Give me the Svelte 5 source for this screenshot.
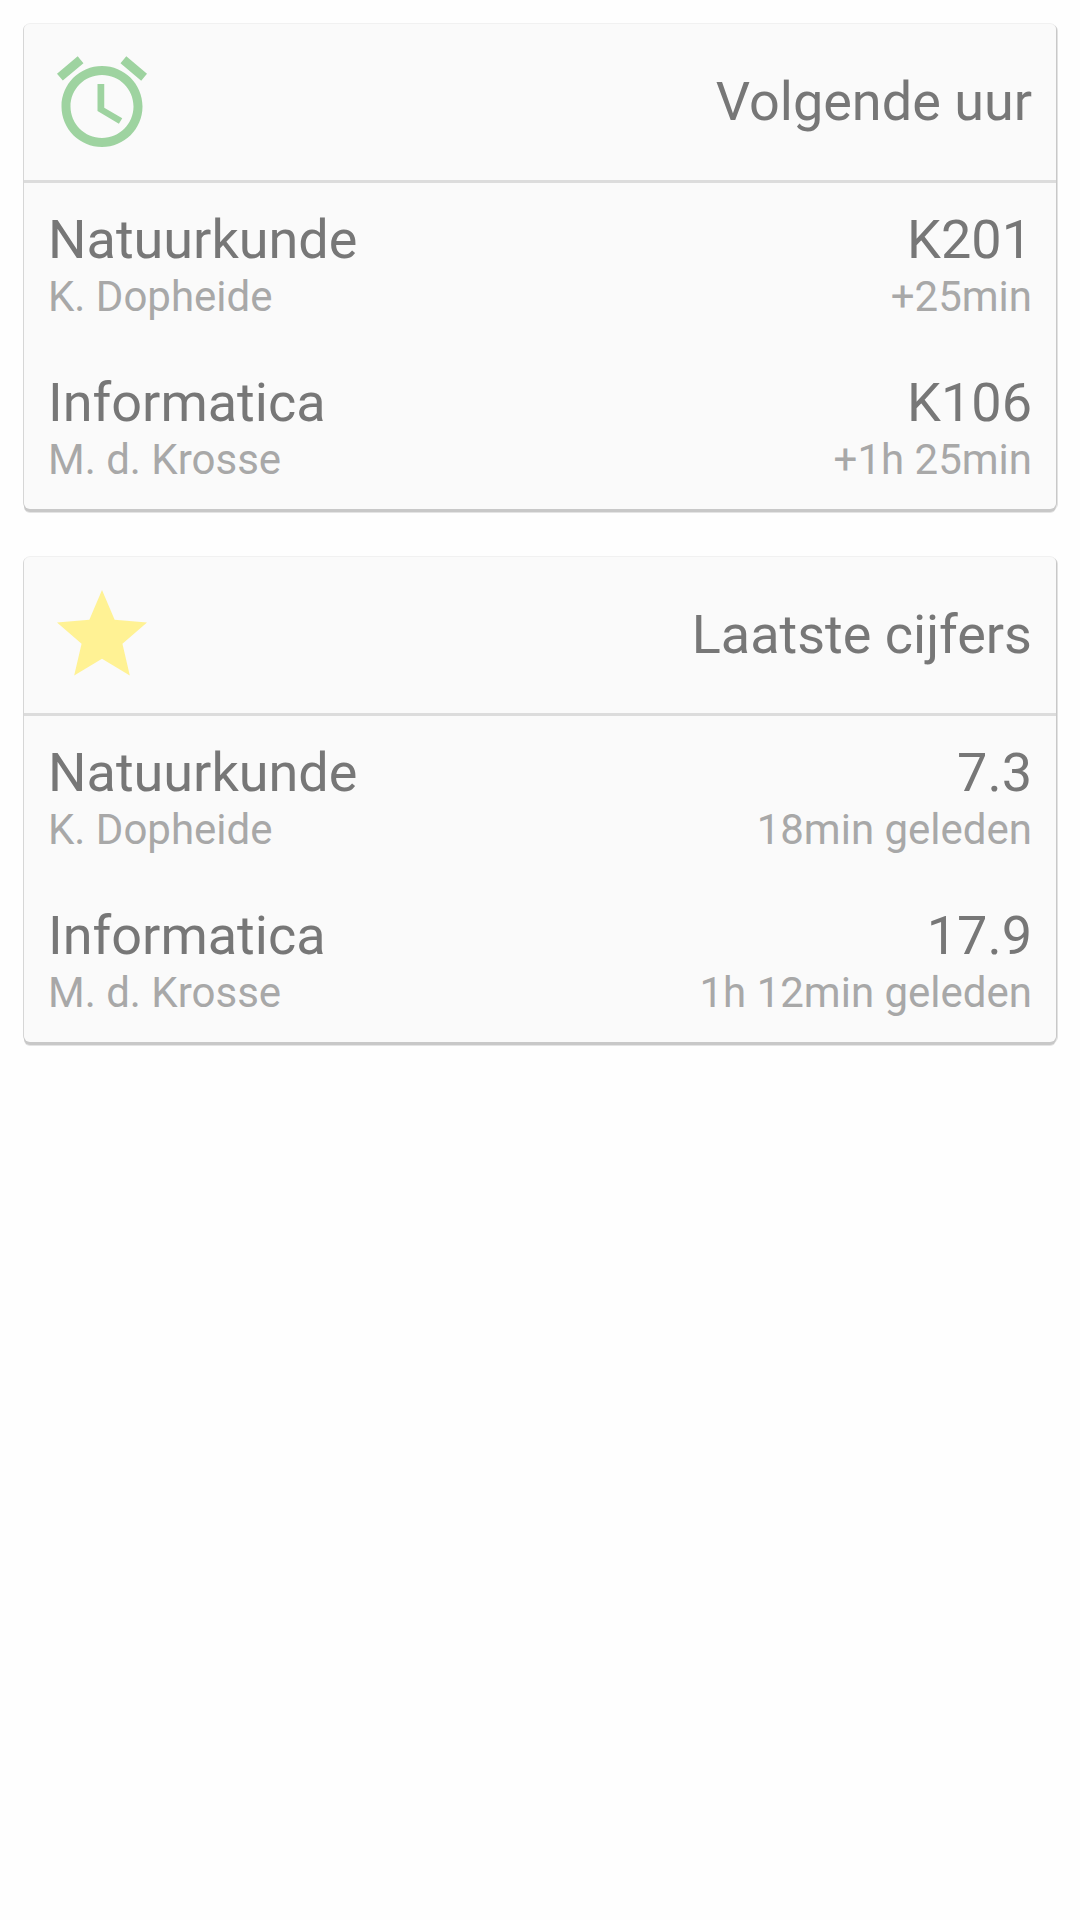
<script>
  const cards = [
    {
      title: 'Volgende uur',
      tone: 'green',
      icon: 'M22 5.72l-4.6-3.86-1.29 1.53 4.6 3.86L22 5.72zM7.88 3.39L6.6 1.86 2 5.71l1.29 1.53 4.59-3.85zM12.5 8H11v6l4.75 2.85.75-1.23-4-2.37V8zM12 4c-4.97 0-9 4.03-9 9s4.02 9 9 9c4.97 0 9-4.03 9-9s-4.03-9-9-9zm0 16c-3.87 0-7-3.13-7-7s3.13-7 7-7 7 3.13 7 7-3.13 7-7 7z',
      rows: [
        { subject: 'Natuurkunde', teacher: 'K. Dopheide', value: 'K201', time: '+25min' },
        { subject: 'Informatica', teacher: 'M. d. Krosse', value: 'K106', time: '+1h 25min' }
      ]
    },
    {
      title: 'Laatste cijfers',
      tone: 'yellow',
      icon: 'M12 17.27L18.18 21l-1.64-7.03L22 9.24l-7.19-.61L12 2 9.19 8.63 2 9.24l5.46 4.73L5.82 21z',
      rows: [
        { subject: 'Natuurkunde', teacher: 'K. Dopheide', value: '7.3', time: '18min geleden' },
        { subject: 'Informatica', teacher: 'M. d. Krosse', value: '17.9', time: '1h 12min geleden' }
      ]
    }
  ];
</script>

<main>
  {#each cards as card}
    <section class="card">
      <header>
        <svg class={card.tone} viewBox="0 0 24 24" aria-hidden="true"><path d={card.icon} /></svg>
        <h2>{card.title}</h2>
      </header>
      <ul>
        {#each card.rows as row}
          <li>
            <div class="side">
              <span class="primary">{row.subject}</span>
              <span class="secondary">{row.teacher}</span>
            </div>
            <div class="side end">
              <span class="primary">{row.value}</span>
              <span class="secondary">{row.time}</span>
            </div>
          </li>
        {/each}
      </ul>
    </section>
  {/each}
</main>

<style>
  :global(body) {
    margin: 0;
    background: #fefefe;
  }

  main {
    display: flex;
    flex-direction: column;
    gap: 48px;
    padding: 24px;
    font-family: Roboto, sans-serif;
    color: #777;
  }

  .card {
    border-radius: 6px;
    background: #fafafa;
    box-shadow:
      0 -1px 0 #f1f1f1,
      0 3px 0 #c8c8c8,
      -1px 0 0 #d6d6d6,
      1px 0 0 #c8c8c8,
      2px 1px 0 #e2e2e2,
      0 4px 0 #e4e4e4;
  }

  header {
    display: flex;
    align-items: center;
    justify-content: space-between;
    padding: 24px;
    border-bottom: 3px solid #dcdcdc;
  }

  svg {
    width: 108px;
    height: 108px;
    flex: none;
  }

  .green {
    fill: #9ed3a0;
  }

  .yellow {
    fill: #fff294;
  }

  h2,
  .primary {
    margin: 0;
    font-size: 54px;
    font-weight: 400;
    line-height: 64px;
  }

  .secondary {
    font-size: 42px;
    line-height: 50px;
    color: #a8a8a8;
  }

  ul {
    margin: 0;
    padding: 0;
    list-style: none;
  }

  li {
    display: flex;
    justify-content: space-between;
    gap: 24px;
    padding: 25px 24px 24px;
  }

  .side {
    display: flex;
    flex-direction: column;
  }

  .end {
    align-items: flex-end;
    text-align: right;
  }
</style>
